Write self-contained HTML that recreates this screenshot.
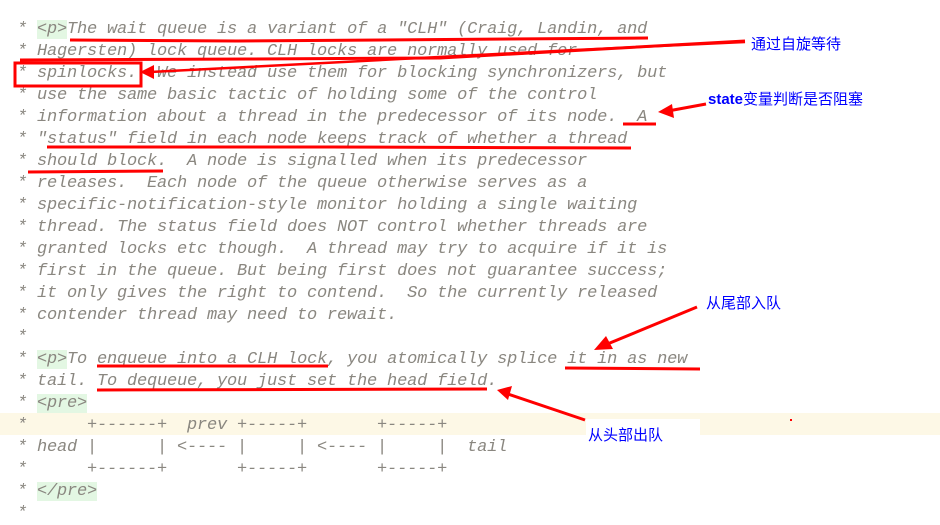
<!DOCTYPE html>
<html><head><meta charset="utf-8"><style>
body{margin:0;width:940px;height:518px;background:#fff;overflow:hidden;position:relative}
#code{position:absolute;left:17px;top:19px;font-family:"Liberation Mono",monospace;font-style:italic;font-size:17px;letter-spacing:-0.2px;line-height:22px;color:#8a8780;white-space:pre}
.t{background:#e3f7e3}
.band{position:absolute;left:0;top:413px;width:940px;height:22px;background:#fdf8e6}
.lbl{position:absolute;font-family:"Liberation Sans","Noto Sans CJK SC",sans-serif;font-size:15px;color:#0000ff;white-space:nowrap;line-height:18px}
</style></head><body>
<div class="band"></div>
<div style="position:absolute;left:586px;top:419px;width:114px;height:34px;background:#fff"></div>
<div id="code">* <span class="t">&lt;p&gt;</span>The wait queue is a variant of a "CLH" (Craig, Landin, and
* Hagersten) lock queue. CLH locks are normally used for
* spinlocks.  We instead use them for blocking synchronizers, but
* use the same basic tactic of holding some of the control
* information about a thread in the predecessor of its node.  A
* "status" field in each node keeps track of whether a thread
* should block.  A node is signalled when its predecessor
* releases.  Each node of the queue otherwise serves as a
* specific-notification-style monitor holding a single waiting
* thread. The status field does NOT control whether threads are
* granted locks etc though.  A thread may try to acquire if it is
* first in the queue. But being first does not guarantee success;
* it only gives the right to contend.  So the currently released
* contender thread may need to rewait.
*
* <span class="t">&lt;p&gt;</span>To enqueue into a CLH lock, you atomically splice it in as new
* tail. To dequeue, you just set the head field.
* <span class="t">&lt;pre&gt;</span>
*      +------+  prev +-----+       +-----+
* head |      | &lt;---- |     | &lt;---- |     |  tail
*      +------+       +-----+       +-----+
* <span class="t">&lt;/pre&gt;</span>
*</div>
<svg width="940" height="518" style="position:absolute;left:0;top:0" fill="none" stroke="#f00" stroke-width="3">
<polyline points="70,40 237,41 648,38"/>
<polyline points="20,60 248,59 440,58 745,41"/>
<polyline points="150,72 575,50 745,42" stroke-width="2.5"/>
<polygon points="140,72 154,65 154,79" fill="#f00" stroke="none"/>
<rect x="15" y="63" width="126" height="23"/>
<line x1="623" y1="124" x2="656" y2="124"/>
<line x1="706" y1="104" x2="668" y2="111"/>
<polygon points="658,112 672,104 674,118" fill="#f00" stroke="none"/>
<polyline points="47,147 330,147 631,148"/>
<line x1="28" y1="172" x2="163" y2="171"/>
<polyline points="97,366 328,366"/>
<polyline points="565,368 700,369"/>
<line x1="697" y1="307" x2="605" y2="345"/>
<polygon points="594,350 606,336 613,349" fill="#f00" stroke="none"/>
<polyline points="97,390 487,389"/>
<line x1="585" y1="420" x2="508" y2="394"/>
<polygon points="497,390 512,386 508,400" fill="#f00" stroke="none"/>
<rect x="790" y="419" width="2" height="2" fill="#f00" stroke="none"/>
</svg>
<div class="lbl" style="left:751px;top:36px">通过自旋等待</div>
<div class="lbl" style="left:708px;top:91px;font-weight:bold">state<span style="font-weight:normal">变量判断是否阻塞</span></div>
<div class="lbl" style="left:706px;top:295px">从尾部入队</div>
<div class="lbl" style="left:588px;top:427px">从头部出队</div>
</body></html>
